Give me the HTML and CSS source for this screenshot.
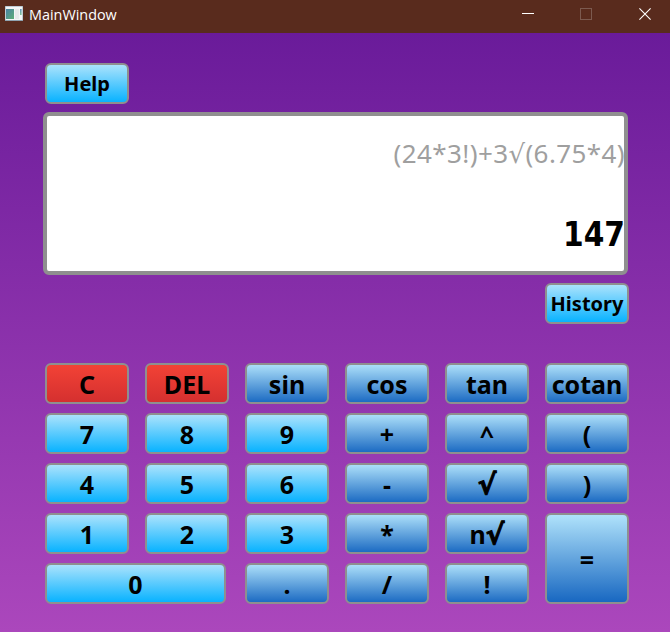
FILE: index.html
```html
<!DOCTYPE html>
<html lang="en">
<head>
<meta charset="utf-8">
<title>MainWindow</title>
<link rel="stylesheet" href="styles.css">
</head>
<body>
<header class="titlebar">
  <svg class="app-icon" width="18" height="15" viewBox="0 0 18 15">
    <defs>
      <linearGradient id="pane" x1="0" y1="0" x2="1" y2="1"><stop offset="0" stop-color="#4b82a4"/><stop offset="1" stop-color="#5fae78"/></linearGradient>
      <linearGradient id="strip" x1="0" y1="0" x2="0" y2="1"><stop offset="0" stop-color="#3f78b0"/><stop offset="1" stop-color="#62b87c"/></linearGradient>
    </defs>
    <rect width="18" height="15" fill="#8fa3b0"/>
    <rect x="0.5" y="0.5" width="17" height="13.5" fill="#f4f6f7"/>
    <rect x="1" y="3" width="8" height="10" fill="url(#pane)"/>
    <rect x="10" y="3" width="4" height="10" fill="#e8eaeb"/>
    <rect x="15.2" y="3" width="1.3" height="6" fill="url(#strip)"/>
  </svg>
  <span class="title">MainWindow</span>
  <svg class="controls" width="131" height="14" viewBox="0 0 131 14" fill="none">
    <path d="M0 6.5h12" stroke="#fff"/>
    <rect x="58.5" y="1.5" width="11" height="11" stroke="#7c5a4f"/>
    <path d="M117.4 1.4l11.2 11.2M128.6 1.4L117.4 12.6" stroke="#fff" stroke-width="1.1"/>
  </svg>
</header>
<main class="calculator">
  <button class="key light small">Help</button>
  <section class="display">
    <div class="expression">(24*3!)+3<span class="root">√</span>(6.75*4)</div>
    <div class="result">147</div>
  </section>
  <button class="key light small history">History</button>
  <section class="keypad">
    <button class="key red">C</button>
    <button class="key red">DEL</button>
    <button class="key dark">sin</button>
    <button class="key dark">cos</button>
    <button class="key dark">tan</button>
    <button class="key dark">cotan</button>
    <button class="key light">7</button>
    <button class="key light">8</button>
    <button class="key light">9</button>
    <button class="key dark">+</button>
    <button class="key dark">^</button>
    <button class="key dark">(</button>
    <button class="key light">4</button>
    <button class="key light">5</button>
    <button class="key light">6</button>
    <button class="key dark">-</button>
    <button class="key dark"><span class="root">√</span></button>
    <button class="key dark">)</button>
    <button class="key light">1</button>
    <button class="key light">2</button>
    <button class="key light">3</button>
    <button class="key dark">*</button>
    <button class="key dark">n<span class="root">√</span></button>
    <button class="key dark equals">=</button>
    <button class="key light zero">0</button>
    <button class="key dark">.</button>
    <button class="key dark">/</button>
    <button class="key dark">!</button>
  </section>
</main>
</body>
</html>
```
FILE: styles.css
```css
* {
  box-sizing: border-box;
}

body {
  margin: 0;
  height: 632px;
  display: flex;
  flex-direction: column;
  overflow: hidden;
  font-family: "Noto Sans", "Open Sans", sans-serif;
}

.titlebar {
  height: 33px;
  flex: none;
  display: flex;
  align-items: flex-start;
  padding: 6px 17px 0 5px;
  background: #592b1d;
  color: #fff;
}

.title {
  margin-left: 6px;
  font-family: "Open Sans", sans-serif;
  font-size: 14.4px;
  line-height: 18px;
}

.controls {
  margin: 1px 0 0 auto;
}

.calculator {
  flex: 1;
  display: flex;
  flex-direction: column;
  padding: 30px 41px 0 45px;
  background: linear-gradient(#6a1b9a, #ab47bc);
}

.key {
  width: 84px;
  height: 41px;
  flex: none;
  display: flex;
  align-items: center;
  justify-content: center;
  padding: 1px 0 0;
  border: 2px solid #8f8f8f;
  border-radius: 6px;
  background-origin: border-box;
  color: #000;
  font: bold 25px/34px "Noto Sans", "Open Sans", sans-serif;
  white-space: nowrap;
}

.small {
  font-size: 20px;
}

.light {
  background-image: linear-gradient(#b3e5fc, #00aaff);
}

.dark {
  background-image: linear-gradient(#b3e5fc, #1565c0);
}

.red {
  background-image: linear-gradient(#f44336, #d32f2f);
}

.display {
  width: 585px;
  height: 163px;
  margin: 8px 0 8px -2px;
  padding-top: 19px;
  border: 4px solid #8f8f8f;
  border-radius: 6px;
  background: #fff;
  text-align: right;
}

.expression {
  height: 36px;
  margin-right: -1px;
  color: #9f9f9f;
  font-size: 26px;
  line-height: 36px;
  letter-spacing: 0.4px;
}

.result {
  margin: 42px -1px 0 0;
  font: bold 33px/44px "DejaVu Sans Condensed", "DejaVu Sans", sans-serif;
}

.root {
  font-family: "DejaVu Sans", sans-serif;
}

.key .root {
  padding-top: 2px;
  font-size: 28px;
  -webkit-text-stroke: 1px #000;
}

.light {
  background-image: linear-gradient(#b3e5fc, #00b0ff);
}

.history {
  align-self: flex-end;
}

.keypad {
  display: grid;
  grid-template-columns: repeat(6, 84px);
  grid-auto-rows: 41px;
  gap: 9px 16px;
  margin-top: 39px;
}

.equals {
  grid-column: 6;
  grid-row: 4 / span 2;
  height: 91px;
}

.zero {
  grid-column: 1 / span 2;
  width: 181px;
}
```
